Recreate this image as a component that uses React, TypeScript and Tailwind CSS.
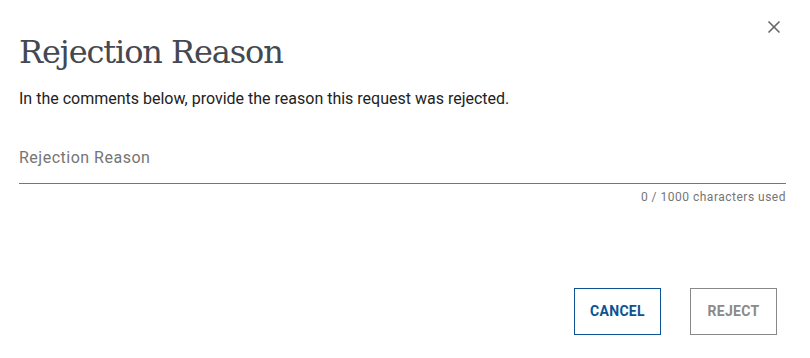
import { X } from "lucide-react";

export default function App() {
  return (
    <div className="w-[810px] h-[358px] bg-white relative font-['Roboto',sans-serif]">
      <button className="absolute right-[26px] top-[17px] text-[#666] p-0">
        <X size={20} strokeWidth={2} />
      </button>
      <div className="pl-[19px] pr-[24px] pt-[31px] flex flex-col">
        <h1 className="font-['DejaVu_Serif',serif] text-[32px] leading-[42px] text-[#444850] tracking-[-1.1px]">
          Rejection Reason
        </h1>
        <p className="mt-[16px] text-[16px] leading-[20px] text-[#222]">
          In the comments below, provide the reason this request was rejected.
        </p>
        <div className="mt-[37px] pb-[13px]">
          <span className="text-[16px] leading-[20px] text-[#757575] tracking-[0.5px]">
            Rejection Reason
          </span>
        </div>
        <hr className="border-0 h-px bg-[#f44336]" />
        <p className="mt-[5px] text-right text-[12px] leading-[16px] text-[#757575] tracking-[0.5px]">
          0 / 1000 characters used
        </p>
        <div className="mt-[83px] flex justify-end gap-[29px] pr-[9px]">
          <button className="w-[87px] h-[47px] border border-[#0b5394] text-[#0b5394] text-[14px] font-bold tracking-[0.3px]">
            CANCEL
          </button>
          <button className="w-[87px] h-[47px] border border-[#888] text-[#8a8a8a] text-[14px] font-bold tracking-[0.3px]">
            REJECT
          </button>
        </div>
      </div>
    </div>
  );
}
